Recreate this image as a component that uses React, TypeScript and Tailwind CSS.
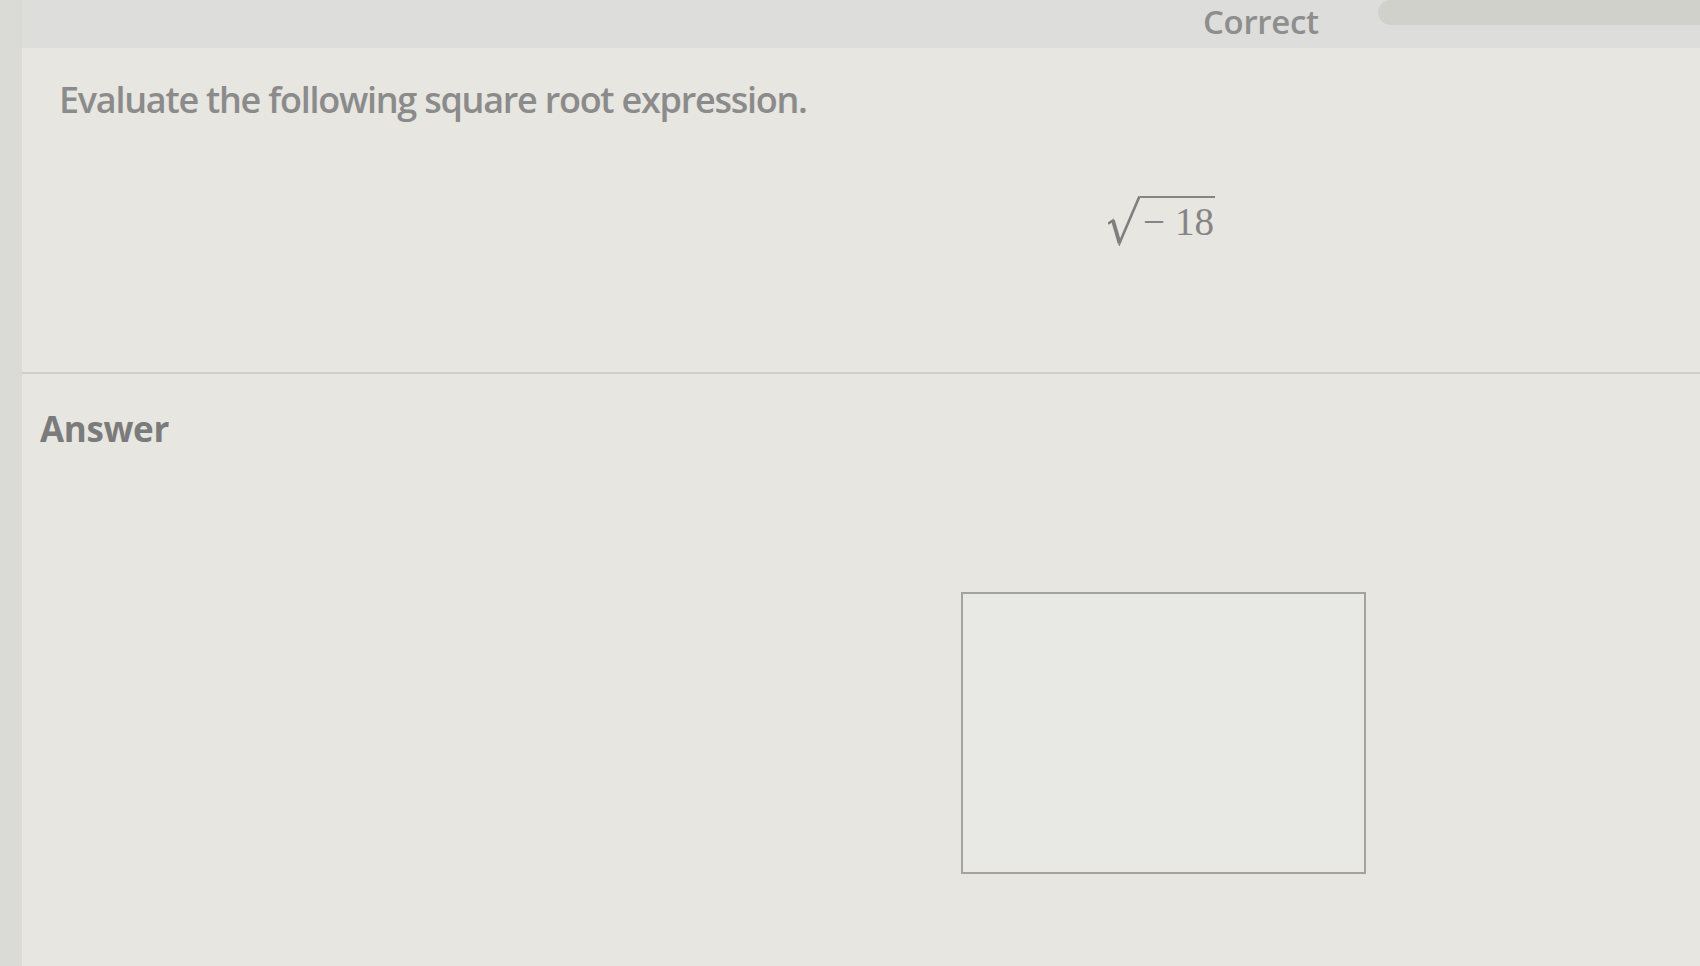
import React from "react";

export default function App() {
  return (
    <div
      className="w-[1700px] h-[966px] overflow-hidden flex bg-[#dbdbd8]"
      style={{ fontFamily: '"Open Sans", "Liberation Sans", sans-serif' }}
    >
      <div className="w-[22px] shrink-0 bg-[#dadad7]" />
      <div className="flex-1 flex flex-col min-w-0">
        {/* top bar */}
        <div className="h-[48px] shrink-0 flex items-start bg-[#dddddb]">
          <span className="ml-[1181px] leading-[1.36] text-[33px] font-semibold text-[#8e8e8e] tracking-[-0.01em]">
            Correct
          </span>
          <div className="ml-auto w-[322px] h-[25px] rounded-l-full bg-[#d1d1cc]" />
        </div>

        {/* question panel */}
        <div className="flex-1 flex flex-col bg-[#e7e6e1]">
          <div className="h-[326px] shrink-0 flex flex-col border-b-2 border-[#cfcfca]">
            <p className="mt-[30px] pl-[37px] text-[36px] leading-[1.2] font-semibold tracking-[-0.035em] text-[#8b8b8b]">
              Evaluate the following square root expression.
            </p>
            <div className="mt-[75px] pl-[1086px] flex items-start text-[#858585]">
              <svg width="32" height="50" viewBox="0 0 32 50" className="shrink-0">
                <path
                  d="M1 27 L5 24.5 L11.5 47 L31 1.5"
                  fill="none"
                  stroke="#7f7f7f"
                  strokeWidth="2.6"
                  strokeLinejoin="miter"
                  strokeLinecap="square"
                />
                <path d="M5 24.5 L11.5 47" stroke="#7f7f7f" strokeWidth="3.8" />
              </svg>
              <span
                className="border-t-2 border-[#858585] pt-[4px] pl-[3px] pr-[1px] text-[39px] leading-none flex"
                style={{ fontFamily: '"Liberation Serif", "Times New Roman", serif' }}
              >
                <span>−</span>
                <span className="ml-[10px]">18</span>
              </span>
            </div>
          </div>

          {/* answer section */}
          <div className="flex-1 flex flex-col">
            <h2 className="mt-[34px] pl-[18px] text-[35px] leading-[1.2] font-bold tracking-[-0.01em] text-[#7b7b7b]">
              Answer
            </h2>
            <div className="mt-[142px] ml-[939px] w-[405px] h-[282px] border-2 border-[#a2a2a1] bg-[#e8e8e5]" />
          </div>
        </div>
      </div>
    </div>
  );
}
